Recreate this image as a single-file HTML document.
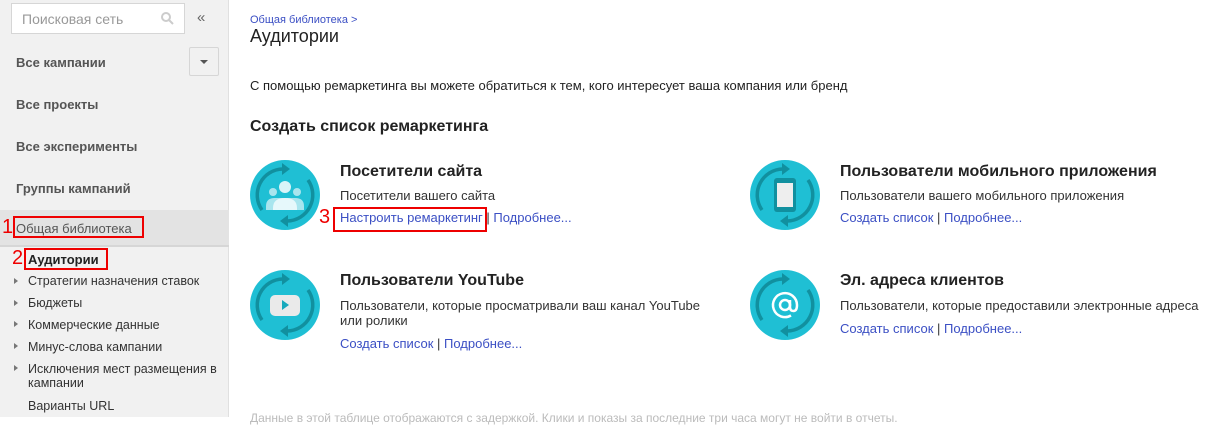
<!DOCTYPE html>
<html><head><meta charset="utf-8"><style>
*{margin:0;padding:0;box-sizing:border-box}
body{width:1209px;height:417px;overflow:hidden;background:#fff;font-family:"Liberation Sans",Arial,sans-serif;position:relative;color:#222}
.a{position:absolute;white-space:nowrap}
#sb{position:absolute;left:0;top:0;width:229px;height:417px;background:#f1f1f1;border-right:1px solid #e0e0e0}
.nav{position:absolute;left:16px;font-size:13px;font-weight:bold;color:#555}
.sub{position:absolute;left:28px;font-size:12.5px;color:#333}
.tri{position:absolute;left:14px;width:0;height:0;border-left:4px solid #777;border-top:3px solid transparent;border-bottom:3px solid transparent}
.red{position:absolute;border:2px solid #e00}
.rn{position:absolute;color:#e00;font-size:20px}
.h{font-size:16px;font-weight:bold;color:#222}
.d{font-size:13px;color:#333}
.l{font-size:13px;color:#3b4fc4}
.l b{font-weight:normal;color:#333}
</style></head><body>
<div id="sb">
<div style="position:absolute;left:11px;top:3px;width:174px;height:31px;background:#fff;border:1px solid #d6d6d6"></div>
<div class="a" style="left:22px;top:11px;font-size:14px;color:#999">Поисковая сеть</div>
<svg class="a" style="left:160px;top:11px" width="14" height="14"><circle cx="6" cy="6" r="4" fill="none" stroke="#ccc" stroke-width="2"/><path d="M9 9l4 4" stroke="#ccc" stroke-width="2"/></svg>
<div class="a" style="left:197px;top:9px;font-size:15px;color:#666">«</div>
<div style="position:absolute;left:189px;top:47px;width:30px;height:29px;border:1px solid #d6d6d6;border-radius:2px"></div>
<div style="position:absolute;left:200px;top:60px;border-left:4px solid transparent;border-right:4px solid transparent;border-top:4px solid #555"></div>
<div class="nav" style="top:55px">Все кампании</div>
<div class="nav" style="top:97px">Все проекты</div>
<div class="nav" style="top:139px">Все эксперименты</div>
<div class="nav" style="top:181px">Группы кампаний</div>
<div style="position:absolute;left:0;top:210px;width:229px;height:37px;background:#e3e3e3;border-bottom:2px solid #d6d6d6"></div>
<div class="a" style="left:16px;top:221px;font-size:13px;color:#555">Общая библиотека</div>
<div class="red" style="left:13px;top:216px;width:131px;height:22px"></div>
<div class="rn" style="left:2px;top:216px">1</div>
<div class="rn" style="left:12px;top:247px">2</div>
<div class="red" style="left:24px;top:248px;width:84px;height:22px"></div>
<div class="a" style="left:28px;top:252px;font-size:13px;font-weight:bold;color:#222">Аудитории</div>
<div class="tri" style="top:278px"></div><div class="sub" style="top:274px">Стратегии назначения ставок</div>
<div class="tri" style="top:300px"></div><div class="sub" style="top:296px">Бюджеты</div>
<div class="tri" style="top:321px"></div><div class="sub" style="top:318px">Коммерческие данные</div>
<div class="tri" style="top:343px"></div><div class="sub" style="top:340px">Минус-слова кампании</div>
<div class="tri" style="top:365px"></div><div class="sub" style="top:362px">Исключения мест размещения в</div>
<div class="sub" style="top:376px">кампании</div>
<div class="sub" style="top:399px">Варианты URL</div>
</div>

<div class="a" style="left:250px;top:14px;font-size:11px;color:#3b4fc4">Общая библиотека &gt;</div>
<div class="a" style="left:250px;top:26px;font-size:18px;color:#222">Аудитории</div>
<div class="a" style="left:250px;top:78px;font-size:13px;color:#222">С помощью ремаркетинга вы можете обратиться к тем, кого интересует ваша компания или бренд</div>
<div class="a h" style="left:250px;top:118px">Создать список ремаркетинга</div>

<svg width="0" height="0" style="position:absolute"><defs>
<g id="ring"><circle cx="35" cy="35" r="35" fill="#1fbfd4"/>
<path d="M12 50A26 26 0 0 1 33 9" fill="none" stroke="#11909f" stroke-width="3.5"/>
<path d="M58 20A26 26 0 0 1 37 61" fill="none" stroke="#11909f" stroke-width="3.5"/>
<path d="M32 3l8 6-8 6z" fill="#11909f"/><path d="M38 55l-8 6 8 6z" fill="#11909f"/></g></defs></svg>

<svg class="a" style="left:250px;top:160px" width="70" height="70"><use href="#ring"/>
<circle cx="35" cy="27" r="6" fill="#d9f4f8"/><circle cx="23" cy="32" r="4" fill="#a8e5ee"/><circle cx="47" cy="32" r="4" fill="#a8e5ee"/>
<path d="M16 46q0-8 9-8h20q9 0 9 8v4H16z" fill="#a8e5ee"/><path d="M23 48q0-10 12-10t12 10v2H23z" fill="#e6f8fb"/></svg>
<div class="a h" style="left:340px;top:163px">Посетители сайта</div>
<div class="a d" style="left:340px;top:188px">Посетители вашего сайта</div>
<div class="a l" style="left:340px;top:210px">Настроить ремаркетинг <b>|</b> Подробнее...</div>
<div class="red" style="left:333px;top:207px;width:154px;height:25px"></div>
<div class="rn" style="left:319px;top:206px">3</div>

<svg class="a" style="left:250px;top:270px" width="70" height="70"><use href="#ring"/>
<rect x="20" y="25" width="30" height="21" rx="5" fill="#eaeaea"/><path d="M32 30l7 5-7 5z" fill="#18a9bc"/></svg>
<div class="a h" style="left:340px;top:272px">Пользователи YouTube</div>
<div class="a d" style="left:340px;top:298px">Пользователи, которые просматривали ваш канал YouTube</div>
<div class="a d" style="left:340px;top:313px">или ролики</div>
<div class="a l" style="left:340px;top:336px">Создать список <b>|</b> Подробнее...</div>

<svg class="a" style="left:750px;top:160px" width="70" height="70"><use href="#ring"/>
<rect x="24" y="18" width="22" height="34" rx="3" fill="#11909f"/><rect x="27" y="23" width="16" height="24" fill="#eeeeee"/></svg>
<div class="a h" style="left:840px;top:163px">Пользователи мобильного приложения</div>
<div class="a d" style="left:840px;top:188px">Пользователи вашего мобильного приложения</div>
<div class="a l" style="left:840px;top:210px">Создать список <b>|</b> Подробнее...</div>

<svg class="a" style="left:750px;top:270px" width="70" height="70"><use href="#ring"/>
<circle cx="35" cy="35" r="5" fill="none" stroke="#fff" stroke-width="2.5"/>
<path d="M40 30v7q0 4 3.5 4t3.5-6a12 12 0 1 0-6 10.5" fill="none" stroke="#fff" stroke-width="2.5"/></svg>
<div class="a h" style="left:840px;top:272px">Эл. адреса клиентов</div>
<div class="a d" style="left:840px;top:298px">Пользователи, которые предоставили электронные адреса</div>
<div class="a l" style="left:840px;top:321px">Создать список <b>|</b> Подробнее...</div>

<div class="a" style="left:250px;top:411px;font-size:12px;color:#bbb">Данные в этой таблице отображаются с задержкой. Клики и показы за последние три часа могут не войти в отчеты.</div>
</body></html>
